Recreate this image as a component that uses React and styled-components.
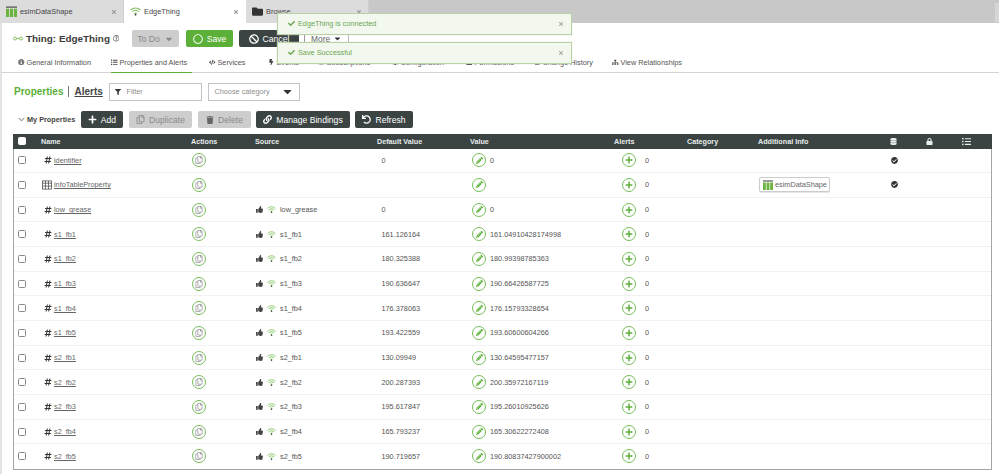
import React from 'react';
import styled, { createGlobalStyle } from 'styled-components';
import {
  FaBan, FaBolt, FaCaretDown, FaCheck, FaCheckCircle, FaCode, FaCog, FaDatabase, FaFilter, FaFolder, FaHashtag,
  FaInfoCircle, FaLink, FaListUl, FaLock, FaPencilAlt, FaPlus, FaRegCircle, FaRegCopy, FaSitemap, FaThumbsUp, FaTimes,
  FaTrash, FaUndo, FaHistory, FaList, FaRegQuestionCircle, FaChevronDown, FaBell
} from 'react-icons/fa';

const Global = createGlobalStyle`
  html, body { margin: 0; padding: 0; background: #fff; overflow: hidden; }
  body { font-family: "Liberation Sans", Arial, sans-serif; color: #444; }
  * { box-sizing: border-box; }
`;

const GREEN = '#5cb038';
const RING = '#76bd58';
const DARK = '#3b4443';

const Page = styled.div`
  width: 999px; height: 474px; position: relative; overflow: hidden;
`;
const TabBar = styled.div`
  height: 23px; background: #c8c8c8; display: flex; align-items: stretch; justify-content: flex-start;
`;
const Tab = styled.div`
  width: ${p => p.$w}px; background: ${p => (p.$active ? '#fff' : '#dcdcdc')};
  display: flex; align-items: center; gap: 3px; padding: 0 6px; font-size: 7.4px;
  color: #444; border-right: 1px solid ${p => (p.$active ? '#fff' : '#cfcfcf')};
  span { flex: 1; }
  svg.close { color: #999; width: 6px; height: 6px; flex: none; }
`;
const Spacer = styled.div`flex: 1;`;
const CornerTab = styled.div`width: 4px; margin: 3px 0 1px; background: #d6d6d6;`;

const Content = styled.div`
  border-left: 2px solid #e3e3e3; height: 451px;
`;
const TitleRow = styled.div`
  height: 28px; padding: 3px 0 0 11px; display: flex; align-items: center;
`;
const Title = styled.h1`
  margin: 0 0 0 3px; font-size: 9.9px; font-weight: bold; color: #3c3c3c; width: 103px;
  display: flex; align-items: center; gap: 3px; white-space: nowrap;
  svg { color: #666; width: 6.5px; height: 6.5px; }
`;
const Btn = styled.div`
  height: 17px; width: ${p => p.$w}px; margin-left: ${p => p.$ml || 0}px;
  background: ${p => (p.$kind === 'green' ? GREEN : p.$kind === 'off' ? '#cdcdcd' : DARK)};
  color: ${p => (p.$kind === 'off' ? '#8a8a8a' : '#fff')};
  border-radius: 2px; font-size: 8.6px; display: flex; align-items: center; justify-content: center; gap: 4px; white-space: nowrap;
  flex: none;
`;
const MoreSep = styled.div`
  height: 17px; margin-left: 5px; padding: 0 6px; border-left: 1px solid #999; border-right: 1px solid #bbb;
  display: flex; align-items: center; gap: 3px; font-size: 8.4px; color: #666;
`;
const NavRow = styled.div`
  height: 22px; display: flex; align-items: stretch; padding-left: 13px; border-bottom: 1.5px solid #d4d4d4;
`;
const NavItem = styled.div`
  width: ${p => p.$w}px; margin-right: ${p => p.$mr || 0}px; display: flex; align-items: center; gap: 2px; font-size: 7.3px; color: #555; white-space: nowrap;
  padding-left: ${p => p.$pl || 0}px; position: relative; top: 1px;
  border-bottom: ${p => (p.$active ? `1.5px solid ${GREEN}` : '1.5px solid transparent')};
  svg { width: 6.5px; height: 6.5px; flex: none; color: #444; }
`;
const FilterRow = styled.div`
  height: 37px; display: flex; align-items: center; padding-left: 12px;
`;
const PropTitle = styled.div`
  font-size: 10px; font-weight: bold; color: ${GREEN}; padding-right: 5px; border-right: 1px solid #777; line-height: 11px;
`;
const AlertTitle = styled.div`
  font-size: 10px; font-weight: bold; color: #444; text-decoration: underline; margin-left: 5px; width: 35px;
`;
const Field = styled.div`
  height: 18px; width: ${p => p.$w}px; margin-left: ${p => p.$ml || 0}px; border: 1px solid #c4c4c4; font-size: 7.3px; color: #8c8c8c;
  display: flex; align-items: center; padding: 0 5px; gap: 5px; justify-content: ${p => (p.$between ? 'space-between' : 'flex-start')};
  svg { color: #333; flex: none; }
`;
const Toolbar = styled.div`
  height: 19px; display: flex; align-items: center; padding-left: 16px;
`;
const ToolLabel = styled.div`
  width: 63px; display: flex; align-items: center; gap: 2px; font-size: 7.3px; font-weight: bold; color: #444; white-space: nowrap;
  svg { width: 7px; height: 7px; color: #999; }
`;
const Table = styled.div`
  margin: 5px 0 0 11px; width: 979px; border: 1px solid #a5a5a5; border-top: 0;
`;
const cols = '28px 150px 64px 122px 93px 144px 73px 71px 117px 36px 36px 37px 1fr';
const HeadRow = styled.div`
  height: 14.5px; background: ${DARK}; color: #e8ecec; display: grid; grid-template-columns: ${cols}; align-items: center;
  font-size: 7.2px; font-weight: bold; margin: 0 -1px;
`;
const Row = styled.div`
  height: 24.67px; display: grid; grid-template-columns: ${cols}; align-items: center; font-size: 7.3px; color: #555;
  border-bottom: 1px solid ${p => (p.$last ? 'transparent' : '#f1f1f1')};
`;
const Cell = styled.div`
  display: flex; align-items: center; gap: ${p => p.$gap ?? 3}px; min-width: 0; white-space: nowrap;
  padding-left: ${p => p.$pl || 0}px;
  justify-content: ${p => (p.$center ? 'center' : 'flex-start')};
`;
const Check = styled.div`
  width: 8px; height: 8px; margin-left: ${p => (p.$head ? 5 : 4)}px; border: 1px solid ${p => (p.$head ? '#fff' : '#888')};
  border-radius: 1.5px; background: ${p => (p.$head ? '#fff' : 'transparent')};
`;
const PropLink = styled.span`
  text-decoration: underline; color: #666;
`;
const HashMark = styled(FaHashtag)`
  width: 8px; height: 8px; margin-left: 2px; color: #333; flex: none;
`;
const Ring = styled.div`
  width: 14px; height: 14px; border-radius: 50%; border: 1px solid ${RING}; color: ${GREEN}; display: flex; align-items: center; justify-content: center; flex: none;
  margin-left: ${p => p.$ml || 0}px;
`;
const AlertCount = styled.span`margin-left: 9px;`;
const Shape = styled.div`
  height: 15px; width: 71px; border: 1px solid #ccc; border-radius: 2px; background: #fff; display: flex; align-items: center; gap: 2px; padding: 0 1px 0 3px; color: #666;
  box-shadow: 0 1px 1px #e5e5e5;
`;
const Toasts = styled.div`
  position: absolute; left: 277px; top: 13px; width: 295px; display: flex; flex-direction: column; gap: 7px;
`;
const Toast = styled.div`
  height: 22px; background: #f3f8ef; border: 1px solid #b7d2a4; color: #6ba653; font-size: 7.3px; display: flex; align-items: center;
  padding: 0 7px 1px 10px; gap: 3px; box-shadow: 0 0 1px #ccc;
  span { flex: 1; }
  svg.x { width: 6px; height: 6px; color: #aaa; }
  svg.c { width: 7px; height: 7px; }
`;

const Stripes = ({ s = 12 }) => (
  <svg width={s} height={s} viewBox="0 0 12 12" style={{ flex: 'none' }}>
    <rect x="0" y="0.5" width="12" height="1.4" fill="#555" />
    <rect x="0" y="3" width="3.4" height="9" fill="#6cb33f" />
    <rect x="4.3" y="3" width="3.4" height="9" fill="#6cb33f" />
    <rect x="8.6" y="3" width="3.4" height="9" fill="#6cb33f" />
  </svg>
);
const Wifi = ({ s = 10 }) => (
  <svg width={s} height={s * 0.8} viewBox="0 0 20 16" fill="none" style={{ flex: 'none' }}>
    <path d="M1 5.5C6 .5 14 .5 19 5.5" stroke="#7cc05a" strokeWidth="2" />
    <path d="M4 8.5c3.5-3 8.5-3 12 0" stroke="#7cc05a" strokeWidth="2" />
    <path d="M7 11c2-1.6 4-1.6 6 0l-3 3z" fill="#7cc05a" />
    <circle cx="10" cy="14" r="1.6" fill="#444" />
  </svg>
);
const KeyLink = () => (
  <svg width="10" height="5" viewBox="0 0 20 10" fill="none" stroke="#6cb33f" strokeWidth="1.6" style={{ flex: 'none' }}>
    <circle cx="4" cy="5" r="3" /><circle cx="16" cy="5" r="3" /><path d="M7 5h6" />
  </svg>
);
const GridIcon = () => (
  <svg width="10" height="10" viewBox="0 0 11 10" fill="none" stroke="#444" strokeWidth="0.8" style={{ flex: 'none' }}>
    <rect x=".5" y=".5" width="10" height="9" /><path d="M.5 3h10M.5 6.2h10M3.8 .5v9M7.2 .5v9" />
  </svg>
);

const rows = [
  ['identifier', '', '0', '0', true, 'n'],
  ['infoTableProperty', '', '', '', true, 't'],
  ['low_grease', 'low_grease', '0', '0'],
  ['s1_fb1', 's1_fb1', '161.126164', '161.04910428174998'],
  ['s1_fb2', 's1_fb2', '180.325388', '180.99398785363'],
  ['s1_fb3', 's1_fb3', '190.636647', '190.66426587725'],
  ['s1_fb4', 's1_fb4', '176.378063', '176.15793328654'],
  ['s1_fb5', 's1_fb5', '193.422559', '193.60600604266'],
  ['s2_fb1', 's2_fb1', '130.09949', '130.64595477157'],
  ['s2_fb2', 's2_fb2', '200.287393', '200.35972167119'],
  ['s2_fb3', 's2_fb3', '195.617847', '195.26010925626'],
  ['s2_fb4', 's2_fb4', '165.793237', '165.30622272408'],
  ['s2_fb5', 's2_fb5', '190.719657', '190.80837427900002'],
];

const App = () => (
  <Page>
    <Global />
    <TabBar>
      <Tab $w={124}><Stripes s={11} /><span>esimDataShape</span><FaTimes className="close" /></Tab>
      <Tab $w={122} $active><Wifi s={11} /><span>EdgeThing</span><FaTimes className="close" /></Tab>
      <Tab $w={123}><FaFolder size={11} color="#333" /><span>Browse</span><FaTimes className="close" /></Tab>
      <Spacer />
      <CornerTab />
    </TabBar>
    <Content>
      <TitleRow>
        <KeyLink />
        <Title>Thing: EdgeThing <FaRegQuestionCircle /></Title>
        <Btn $kind="off" $w={47} $ml={3}>To Do <FaCaretDown size={10} /></Btn>
        <Btn $kind="green" $w={47} $ml={7}><FaRegCircle size={10} /> Save</Btn>
        <Btn $w={60} $ml={6}><FaBan size={10} /> Cancel</Btn>
        <MoreSep>More <FaCaretDown size={9} color="#333" /></MoreSep>
      </TitleRow>
      <NavRow>
        <NavItem $w={96} $pl={3}><FaInfoCircle style={{ color: '#777' }} /> General Information</NavItem>
        <NavItem $w={81} $mr={17} $active><FaList /> Properties and Alerts</NavItem>
        <NavItem $w={59}><FaCode /> Services</NavItem>
        <NavItem $w={49}><FaBolt /> Events</NavItem>
        <NavItem $w={75} $pl={1}><FaBell /> Subscriptions</NavItem>
        <NavItem $w={74}><FaCog /> Configuration</NavItem>
        <NavItem $w={68}><FaLock /> Permissions</NavItem>
        <NavItem $w={78}><FaHistory /> Change History</NavItem>
        <NavItem $w={90}><FaSitemap /> View Relationships</NavItem>
      </NavRow>
      <FilterRow>
        <PropTitle>Properties</PropTitle>
        <AlertTitle>Alerts</AlertTitle>
        <Field $w={93}><FaFilter size={6} /> Filter</Field>
        <Field $w={92} $ml={6} $between>Choose category <FaCaretDown size={13} /></Field>
      </FilterRow>
      <Toolbar>
        <ToolLabel><FaChevronDown /> My Properties</ToolLabel>
        <Btn $w={42}><FaPlus size={9} /> Add</Btn>
        <Btn $kind="off" $w={63} $ml={6}><FaRegCopy size={9} /> Duplicate</Btn>
        <Btn $kind="off" $w={53} $ml={6}><FaTrash size={8} color="#666" /> Delete</Btn>
        <Btn $w={94} $ml={5}><FaLink size={9} /> Manage Bindings</Btn>
        <Btn $w={58} $ml={5}><FaUndo size={9} /> Refresh</Btn>
      </Toolbar>
      <Table>
        <HeadRow>
          <Cell><Check $head /></Cell>
          <Cell>Name</Cell><Cell>Actions</Cell><Cell>Source</Cell><Cell>Default Value</Cell><Cell>Value</Cell>
          <Cell>Alerts</Cell><Cell>Category</Cell><Cell>Additional Info</Cell>
          <Cell $center><FaDatabase size={7} /></Cell><Cell $center $pl={1}><FaLock size={7} /></Cell><Cell $center $pl={1}><FaListUl size={9} /></Cell>
        </HeadRow>
        {rows.map((r, i) => (
          <Row key={r[0]} $last={i === rows.length - 1}>
            <Cell><Check /></Cell>
            <Cell $gap={2}>{r[5] === 't' ? <GridIcon /> : <HashMark />}<PropLink>{r[0]}</PropLink></Cell>
            <Cell><Ring><FaRegCopy size={8} color="#999" /></Ring></Cell>
            <Cell $gap={4}>{r[1] && <><FaThumbsUp size={7} color="#444" /><Wifi s={9} /><span>{r[1]}</span></>}</Cell>
            <Cell $pl={3.5}>{r[2]}</Cell>
            <Cell $gap={4}><Ring $ml={1}><FaPencilAlt size={7} /></Ring>{r[3]}</Cell>
            <Cell $gap={0}><Ring $ml={7}><FaPlus size={8} /></Ring><AlertCount>0</AlertCount></Cell>
            <Cell />
            <Cell>{r[5] === 't' && <Shape><Stripes s={10} />esimDataShape</Shape>}</Cell>
            <Cell $center>{r[4] && <FaCheckCircle size={7} color="#333" />}</Cell>
            <Cell /><Cell /><Cell />
          </Row>
        ))}
      </Table>
    </Content>
    <Toasts>
      <Toast><FaCheck className="c" /><span>EdgeThing is connected</span><FaTimes className="x" /></Toast>
      <Toast><FaCheck className="c" /><span>Save Successful</span><FaTimes className="x" /></Toast>
    </Toasts>
  </Page>
);

export default App;
